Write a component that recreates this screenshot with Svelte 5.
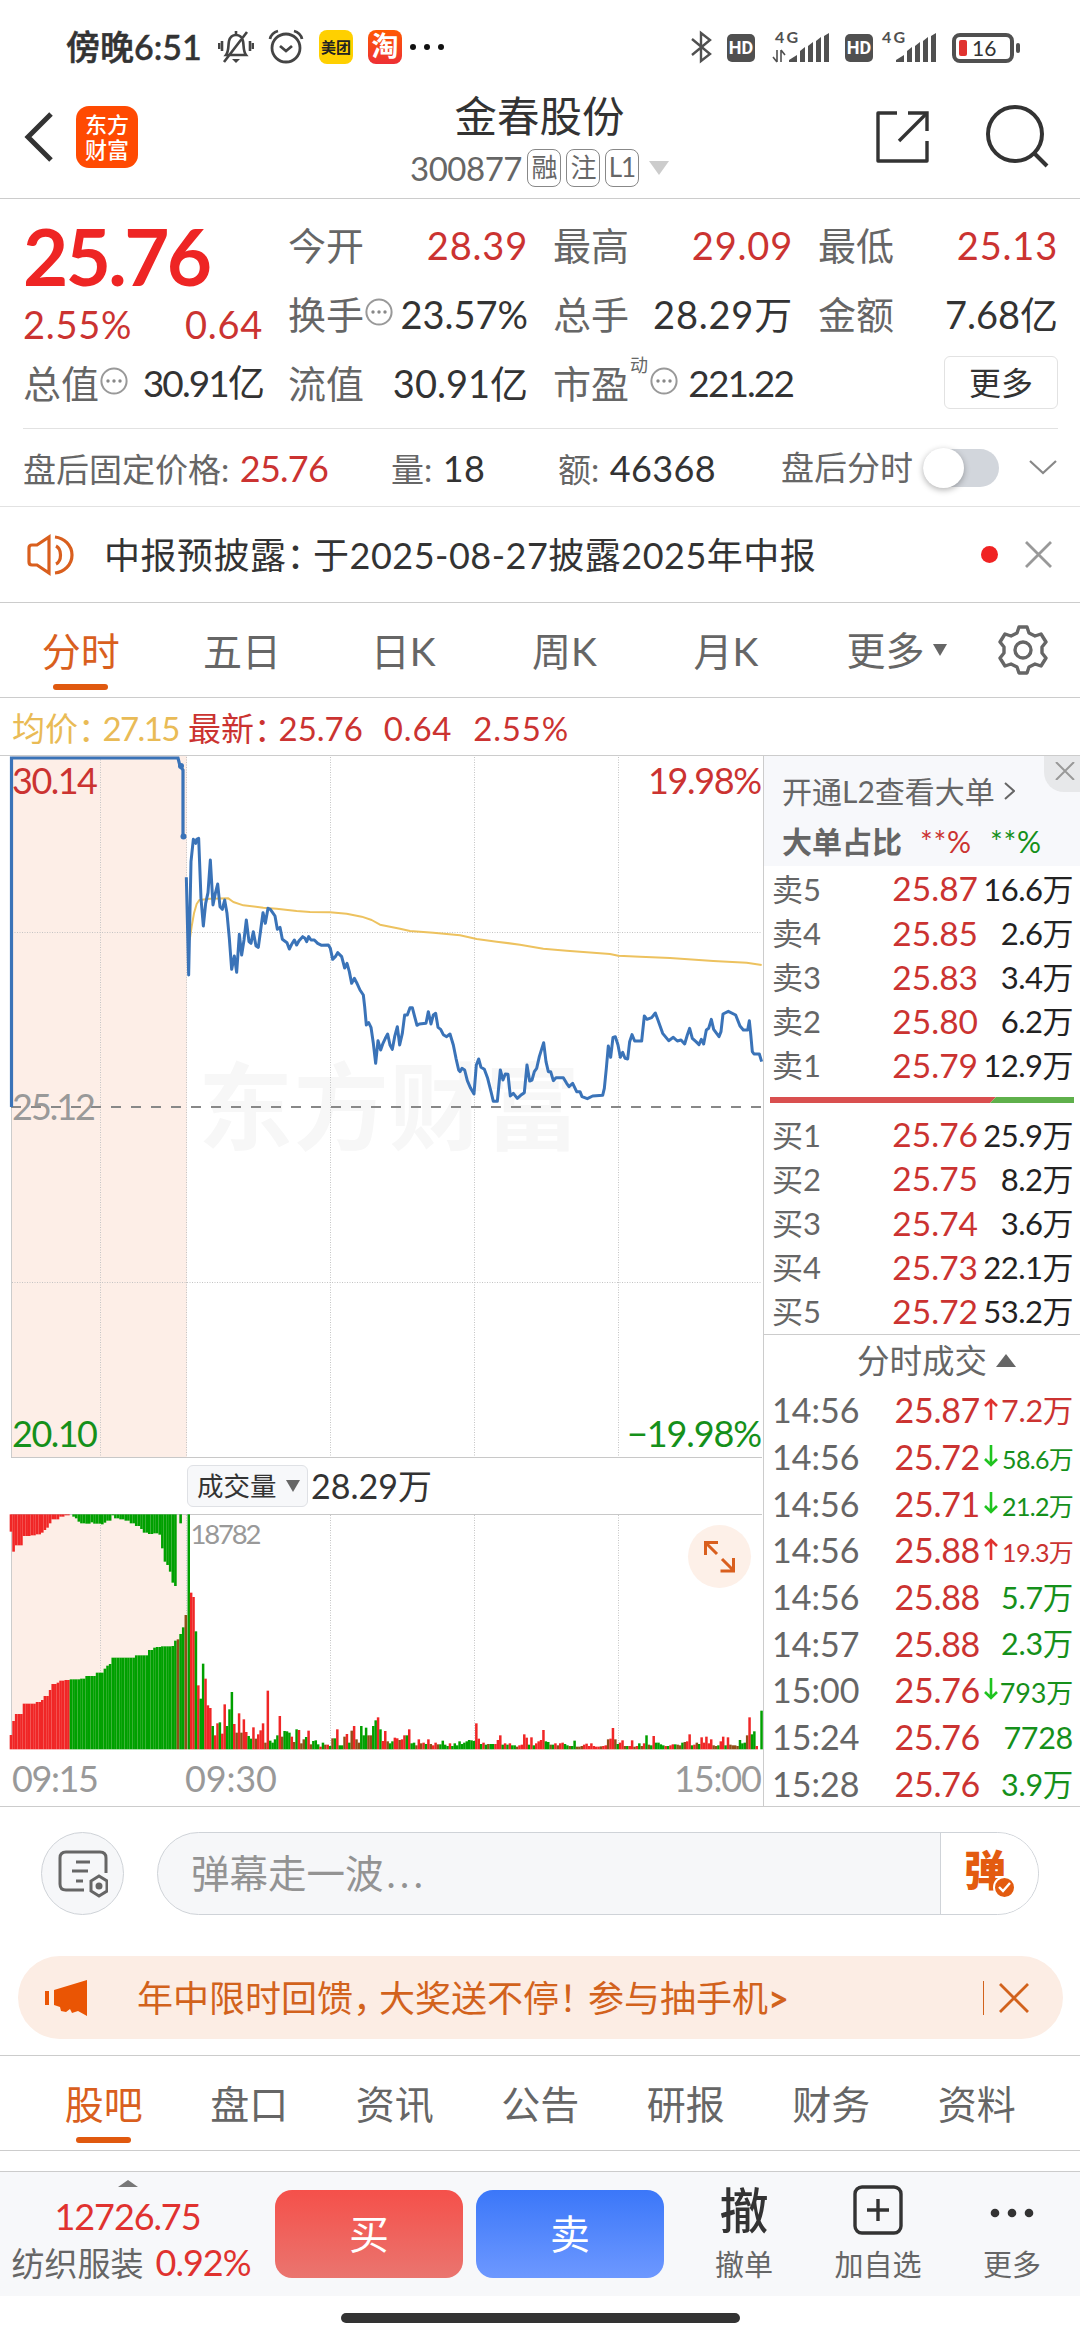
<script lang="ts">
  const periods = ["分时", "五日", "日K", "周K", "月K"];
  const sections = ["股吧", "盘口", "资讯", "公告", "研报", "财务", "资料"];

  const asks = [
    ["卖5", "25.87", "16.6万"],
    ["卖4", "25.85", "2.6万"],
    ["卖3", "25.83", "3.4万"],
    ["卖2", "25.80", "6.2万"],
    ["卖1", "25.79", "12.9万"],
  ];
  const bids = [
    ["买1", "25.76", "25.9万"],
    ["买2", "25.75", "8.2万"],
    ["买3", "25.74", "3.6万"],
    ["买4", "25.73", "22.1万"],
    ["买5", "25.72", "53.2万"],
  ];

  const trades = [
    { time: "14:56", price: "25.87", dir: "up", vol: "7.2万", tone: "red", size: "" },
    { time: "14:56", price: "25.72", dir: "down", vol: "58.6万", tone: "green", size: "small" },
    { time: "14:56", price: "25.71", dir: "down", vol: "21.2万", tone: "green", size: "small" },
    { time: "14:56", price: "25.88", dir: "up", vol: "19.3万", tone: "red", size: "small" },
    { time: "14:56", price: "25.88", dir: "", vol: "5.7万", tone: "green", size: "" },
    { time: "14:57", price: "25.88", dir: "", vol: "2.3万", tone: "green", size: "" },
    { time: "15:00", price: "25.76", dir: "down", vol: "793万", tone: "green", size: "mid" },
    { time: "15:24", price: "25.76", dir: "", vol: "7728", tone: "green", size: "" },
    { time: "15:28", price: "25.76", dir: "", vol: "3.9万", tone: "green", size: "" },
  ];

  // chart series are stored on a grid three times finer than the layout
  const pricePoints =
    "559,412 566,705 573,365 580,298 587,310 590,298 596,295 603,475 610,558 617,490 624,458 631,360 639,495 646,460 653,432 660,500 667,508 674,480 681,520 688,595 695,688 703,648 710,697 718,583 725,645 732,600 739,540 747,605 753,610 760,575 768,618 775,622 782,570 789,518 796,550 804,505 811,508 818,518 825,528 832,568 840,562 847,598 854,603 861,608 868,627 875,613 883,600 890,615 897,602 908,590 915,595 920,605 926,590 933,600 943,600 953,610 965,616 985,615 991,625 998,658 1006,650 1013,638 1025,650 1034,684 1041,670 1048,695 1055,730 1063,715 1070,728 1080,750 1090,765 1094,800 1099,855 1106,848 1113,862 1120,910 1127,970 1134,902 1142,930 1149,910 1156,895 1163,882 1170,915 1177,928 1184,890 1192,860 1199,915 1207,880 1214,825 1222,825 1230,803 1237,803 1244,830 1251,856 1258,852 1278,850 1285,815 1293,852 1300,825 1307,820 1314,862 1322,868 1330,884 1340,890 1350,882 1360,915 1368,955 1376,990 1380,995 1386,985 1394,990 1402,1022 1412,1045 1422,1062 1429,975 1436,957 1443,982 1453,988 1463,1015 1473,1055 1480,1084 1492,1084 1501,990 1509,1020 1516,1002 1524,1003 1531,1068 1540,1060 1552,1075 1562,1066 1573,1058 1581,975 1589,1023 1596,1020 1603,995 1610,985 1618,950 1631,908 1638,965 1645,995 1652,995 1660,1022 1668,1013 1690,1013 1700,1030 1707,1040 1718,1030 1730,1055 1740,1055 1746,1070 1762,1076 1778,1068 1808,1066 1813,1045 1819,985 1825,918 1832,952 1839,892 1846,890 1854,915 1861,952 1868,937 1875,955 1883,957 1889,905 1896,884 1904,903 1925,903 1933,828 1941,838 1955,833 1966,819 1973,838 1988,880 2006,902 2020,892 2032,903 2043,900 2054,912 2062,885 2069,865 2077,895 2088,905 2097,914 2104,898 2111,912 2119,870 2126,865 2134,838 2141,868 2157,890 2163,875 2169,822 2185,814 2207,825 2220,858 2230,870 2243,870 2248,842 2252,880 2257,935 2262,942 2278,942 2285,965";
  const avgPoints =
    "569,600 575,560 582,520 590,492 598,480 630,476 685,475 700,486 730,496 790,503 830,506 890,513 930,516 990,517 1040,521 1085,530 1115,540 1140,554 1200,566 1230,573 1300,578 1380,586 1430,597 1490,605 1560,614 1630,626 1700,632 1830,642 1855,647 1920,650 2010,654 2140,663 2240,668 2285,675";

  // one bar per minute: r = up, g = down, b = overlap
  const volumes =
    "g705 r470 r457 g354 r192 g152 g257 r212 r132 r124 g70 r42 r78 g81 r47 r135 g70 g120 g172 r76 b50 r108 b50 r90 r52 g40 g32 r66 b32 r45 r57 r78 b20 r176 g26 g20 g30 g42 r100 b38 g55 g54 g50 r38 b22 g60 r58 b18 b30 g37 r56 b15 g25 g27 g15 r8 g20 b14 r14 g10 b33 g33 r60 g12 g12 b38 r46 g20 b56 r70 b30 b20 g70 g42 g65 b42 b42 g70 g87 r96 g60 r25 r55 b24 g18 g24 r35 r33 b28 r30 r42 g42 r60 g18 g20 b12 r30 b18 r20 g16 r30 b16 r12 r20 b15 g15 g26 g14 g10 r18 g10 g18 g12 g24 g16 g20 g24 g28 g27 g25 r78 r32 g16 r20 g14 b16 g16 g16 r16 r28 r42 g14 r18 g14 r18 g12 g12 b8 r12 r14 r45 r35 g14 r36 g12 r18 r24 r28 r58 g24 g22 b14 g14 r18 b12 r18 r20 g16 g12 b10 g10 g26 b8 b8 b10 r14 r17 r10 r18 r10 r8 r8 b9 r10 r12 b30 r32 r64 b30 g16 r20 r27 b10 g10 r10 r27 b8 r10 g18 b10 r18 g42 b14 g12 r40 g20 g20 g15 g12 r10 g10 r12 r15 g15 b14 b12 g20 b22 r24 r45 g12 r14 b20 g16 r36 r20 r38 r18 r30 b12 b10 g12 r24 r38 g12 r36 b14 b12 b12 b10 g28 g18 g20 b42 r96 g45 g54 r10 g0 g116"
      .split(" ")
      .map((v, i) => ({ x: 562.5 + i * 7.19, tone: v[0], h: Number(v.slice(1)) }));

  type Step = [number, number];
  const matched: Step[] = [
    [29, 1005], [36, 963], [44, 942], [67, 911], [106, 906], [122, 900], [130, 888], [145, 870], [153, 852],
    [168, 848], [177, 842], [192, 840], [208, 838], [240, 836], [255, 828], [286, 818], [311, 806], [319, 797],
    [327, 792], [336, 773], [405, 766], [444, 750], [460, 743], [468, 741], [485, 739], [514, 738], [521, 722],
    [527, 718], [538, 702], [546, 682], [554, 645],
  ];
  const unmatched: Step[] = [
    [29, 395], [36, 455], [44, 436], [67, 408], [92, 406], [106, 403], [122, 398], [130, 390], [138, 383],
    [145, 370], [153, 358], [177, 350], [190, 346], [208, 343], [215, 350], [223, 355], [230, 365], [238, 370],
    [255, 371], [270, 367], [280, 371], [300, 373], [311, 368], [320, 362], [336, 346], [343, 355], [355, 358],
    [370, 362], [385, 370], [400, 378], [415, 387], [430, 398], [440, 402], [455, 400], [470, 404], [482, 445],
    [490, 485], [498, 495], [506, 515], [514, 548], [521, 558], [529, 343], [538, 370], [546, 343],
  ];

  function levelAt(steps: Step[], x: number) {
    let y = steps[0][1];
    for (const s of steps) if (s[0] <= x + 2) y = s[1];
    return y;
  }

  const auction = Array.from({ length: 68 }, (_, i) => {
    const x = 29 + i * 7.83;
    return {
      x,
      low: levelAt(matched, x),
      high: levelAt(unmatched, x),
      tone: x < 204 ? "r" : (x > 523 && x < 536) || x > 552 ? "b" : "g",
    };
  });
</script>

{#snippet more()}
  <svg class="hint" viewBox="0 0 28 28">
    <circle cx="14" cy="14" r="12.6" fill="none" stroke="#999" stroke-width="2" />
    <circle cx="8" cy="14" r="1.7" fill="#888" />
    <circle cx="14" cy="14" r="1.7" fill="#888" />
    <circle cx="20" cy="14" r="1.7" fill="#888" />
  </svg>
{/snippet}

<div class="screen">
  <div class="status">
    <span class="clock">傍晚6:51</span>
    <svg class="bell" width="36" height="36" viewBox="0 0 36 36" fill="none" stroke="#444" stroke-width="2.6">
      <path d="M8 26c3-4 2-9 3-14 1-4 4-6 7-6s6 2 7 6c1 5 0 10 3 14zM18 6V2M29 3L6 33M4 12v10M1 14v6M32 12v10M35 14v6" />
      <path d="M14 30h8l-4 4z" fill="#444" stroke="none" />
    </svg>
    <svg class="alarm" width="36" height="36" viewBox="0 0 36 36" fill="none" stroke="#444" stroke-width="2.8">
      <circle cx="18" cy="19" r="14" />
      <path d="M2 10c1-4 4-7 8-8M34 10c-1-4-4-7-8-8M12 17l6 5 6-5" />
    </svg>
    <span class="app meituan">美团</span>
    <span class="app taobao">淘</span>
    <svg class="dots" width="36" height="8" viewBox="0 0 36 8" fill="#111">
      <circle cx="4" cy="4" r="3" /><circle cx="18" cy="4" r="3" /><circle cx="32" cy="4" r="3" />
    </svg>
    <svg class="radio" width="332" height="52" viewBox="0 -8 332 52" fill="#505050">
      <path d="M2 10l18 15-9 7V4l9 7L2 26" fill="none" stroke="#505050" stroke-width="2.4" />
      <rect x="37" y="5" width="28" height="28" rx="5" />
      <text class="hd" x="51" y="25" text-anchor="middle">HD</text>
      <text class="gen" x="85" y="14" textLength="23">4G</text>
      <path d="M87 21v12M83 28l4 5M91 33V21M91 21l4 5" fill="none" stroke="#505050" stroke-width="1.6" />
      <path d="M99 33v-2l8-5v7zM110 33V22l5-4v15zM118 33V17l5-4v20zM126 33V12l5-4v25zM134 33V7l5-3v29z" />
      <rect x="155" y="5" width="28" height="28" rx="5" />
      <text class="hd" x="169" y="25" text-anchor="middle">HD</text>
      <text class="gen" x="192" y="14" textLength="23">4G</text>
      <path d="M206 33v-2l8-5v7zM217 33V22l5-4v15zM225 33V17l5-4v20zM233 33V12l5-4v25zM241 33V7l5-3v29z" />
      <rect x="264" y="6" width="58" height="26" rx="6" fill="none" stroke="#505050" stroke-width="4" />
      <rect x="269" y="11" width="8" height="16" rx="2" fill="#e0322f" />
      <text x="282" y="27" class="charge">16</text>
      <rect x="326" y="14" width="4" height="10" rx="2" />
    </svg>
  </div>

  <header>
    <svg class="back" width="30" height="50" viewBox="0 0 30 50" fill="none" stroke="#333" stroke-width="5">
      <path d="M27 2L4 25l23 23" />
    </svg>
    <span class="logo"><span>东方</span><span>财富</span></span>
    <div class="title">
      <h1>金春股份</h1>
      <div class="code">
        <span>300877</span><em>融</em><em>注</em><em>L1</em>
        <svg width="20" height="14" viewBox="0 0 20 14"><path d="M0 0h20L10 14z" fill="#ccc" /></svg>
      </div>
    </div>
    <svg class="share" width="54" height="54" viewBox="0 0 54 54" fill="none" stroke="#333" stroke-width="3.4" stroke-linejoin="round">
      <path d="M22 3H3v48h49V31" />
      <path d="M33 3h19v18" stroke-linejoin="miter" />
      <path d="M51 4L24 31" />
    </svg>
    <svg class="search" width="64" height="64" viewBox="0 0 64 64" fill="none" stroke="#333" stroke-width="4">
      <circle cx="29" cy="29" r="27" /><path d="M48 48l13 13" />
    </svg>
  </header>

  <section class="quote">
    <div class="now">
      <strong>25.76</strong>
      <div class="change"><span>2.55%</span><span>0.64</span></div>
      <div class="cell tight"><label>总值</label>{@render more()}<b>30.91亿</b></div>
    </div>
    <div class="cell"><label>今开</label><b class="red">28.39</b></div>
    <div class="cell"><label>最高</label><b class="red">29.09</b></div>
    <div class="cell"><label>最低</label><b class="red">25.13</b></div>
    <div class="cell"><label>换手</label>{@render more()}<b>23.57%</b></div>
    <div class="cell wide"><label>总手</label><b>28.29万</b></div>
    <div class="cell"><label>金额</label><b>7.68亿</b></div>
    <div class="cell"><label>流值</label><b>30.91亿</b></div>
    <div class="cell tight"><label>市盈</label><sup>动</sup>{@render more()}<b>221.22</b></div>
    <div class="cell"><button class="more">更多</button></div>
  </section>

  <section class="after">
    <span class="fixed">盘后固定价格: <b class="red">25.76</b></span>
    <span class="qty">量: <b>18</b></span>
    <span class="amt">额: <b>46368</b></span>
    <span class="sw">盘后分时</span>
    <i class="toggle"></i>
    <svg width="28" height="15" viewBox="0 0 28 15" fill="none" stroke="#888" stroke-width="2.2"><path d="M1 1l13 12L27 1" /></svg>
  </section>

  <section class="notice">
    <svg width="48" height="42" viewBox="0 0 48 42" fill="none" stroke="#d95f1e" stroke-width="3.2">
      <path d="M22 3v36L10 31H5c-2 0-3-1-3-3V14c0-2 1-3 3-3h5zM29 12c6 3 6 15 0 18M28 3c9 1 17 8 17 18s-8 17-17 18" />
    </svg>
    <p>中报预披露<span class="half">：</span>于2025-08-27披露2025年中报</p>
    <i class="dot"></i>
    <svg class="x" width="27" height="27" viewBox="0 0 27 27" stroke="#999" stroke-width="2.8"><path d="M1 1l25 25M26 1L1 26" /></svg>
  </section>

  <nav class="periods">
    {#each periods as period, i}
      <span class:active={i === 0}>{period}</span>
    {/each}
    <span class="drop">更多<svg width="14" height="12" viewBox="0 0 14 12"><path d="M0 0h14L7 12z" fill="#666" /></svg></span>
    <svg class="gear" width="50" height="50" viewBox="0 0 50 50" fill="none" stroke="#666" stroke-width="3.4" stroke-linejoin="round">
      <path d="M21 2h8l2 6 6 3 6-2 5 8-4 5v6l4 5-5 8-6-2-6 3-2 6h-8l-2-6-6-3-6 2-5-8 4-5v-6l-4-5 5-8 6 2 6-3z" />
      <circle cx="25" cy="25" r="8" />
    </svg>
  </nav>

  <p class="legend">
    <span class="avg">均价<span class="half">：</span><b>27.15</b></span><span>最新<span class="half">：</span>25.76</span><span class="delta">0.64</span><span class="delta">2.55%</span>
  </p>

  <div class="market">
    <div class="charts">
      <svg class="price" width="763" height="702" viewBox="0 756 763 702">
        <rect x="12" y="756" width="175" height="702" fill="#fdeee7" />
        <text class="mark" x="198" y="1143" textLength="382">东方财富</text>
        <g stroke="#c4c4c4" stroke-dasharray="1 1.5">
          <path d="M100.5 757v700M186.5 757v700M330.5 757v700M474.5 757v700M618.5 757v700M12 932.5h750M12 1282.5h750" />
        </g>
        <path d="M11.5 1107v350" stroke="#ccc" />
        <path d="M11 1107h751" stroke="#888" stroke-width="2" stroke-dasharray="10 10" />
        <path d="M11 1457.5h751" stroke="#c8c8c8" />
        <path d="M11.5 1107V758H178l2 8 3 4v65" fill="none" stroke="#3a73b8" stroke-width="3.2" />
        <circle cx="181" cy="766" r="3" fill="#3a73b8" />
        <circle cx="183.5" cy="836.5" r="3" fill="#3a73b8" />
        <g transform="translate(0 740) scale(.33333)" fill="none" stroke-linejoin="round">
          <polyline points={avgPoints} stroke="#edc25f" stroke-width="6" />
          <polyline points={pricePoints} stroke="#3a73b8" stroke-width="9" />
        </g>
        <g class="scale">
          <text x="12" y="794" fill="#cb3331" textLength="86">30.14</text>
          <text x="762" y="794" fill="#cb3331" text-anchor="end" textLength="114">19.98%</text>
          <text x="12" y="1120" fill="#999" textLength="84">25.12</text>
          <text x="12" y="1447" fill="#15901a" textLength="86">20.10</text>
          <text x="762" y="1447" fill="#15901a" text-anchor="end" textLength="135">−19.98%</text>
        </g>
      </svg>
      <div class="indicator">
        <span class="pick">成交量<svg width="14" height="12" viewBox="0 0 14 12"><path d="M0 0h14L7 12z" fill="#666" /></svg></span>
        <span>28.29万</span>
      </div>
      <svg class="volume" width="763" height="292" viewBox="0 1514 763 292">
        <rect x="12" y="1514" width="175" height="235" fill="#fdeee7" />
        <path d="M11 1514.5h751" stroke="#c8c8c8" />
        <path d="M11.5 1514v235" stroke="#ccc" />
        <path d="M100.5 1515v234M186.5 1515v234M330.5 1515v234M474.5 1515v234M618.5 1515v234" stroke="#c4c4c4" stroke-dasharray="1 1.5" />
        <g transform="translate(0 1400) scale(.33333)">
          {#each auction as bar}
            <rect class={bar.tone} x={bar.x} y={bar.low} width="7.83" height={1048 - bar.low} />
            <rect class={bar.tone} x={bar.x} y="343" width="7.83" height={bar.high - 343} />
          {/each}
          {#each volumes as bar}
            <rect class={bar.tone} x={bar.x} y={1048 - bar.h} width="7.5" height={bar.h} />
          {/each}
        </g>
        <text class="peak" x="190.5" y="1544" textLength="71">18782</text>
        <circle cx="719.5" cy="1556.5" r="31.5" fill="#fdf0e8" />
        <path d="M705.5 1555v-12.5H718M706 1543l11 11M733.5 1558v13h-13M733 1570l-11-11" fill="none" stroke="#d95f1e" stroke-width="3" />
        <g class="scale" fill="#999">
          <text x="12" y="1792" textLength="87">09:15</text>
          <text x="185" y="1792" textLength="92">09:30</text>
          <text x="762" y="1792" text-anchor="end" textLength="88">15:00</text>
        </g>
      </svg>
    </div>

    <aside>
      <div class="level2">
        <span class="open">开通L2查看大单<svg width="11" height="18" viewBox="0 0 11 18" fill="none" stroke="#666" stroke-width="2"><path d="M1 1l9 8-9 8" /></svg></span>
        <span class="ratio">大单占比<i class="red">**%</i><i class="green">**%</i></span>
        <span class="shut"><svg width="20" height="18" viewBox="0 0 20 18" stroke="#999" stroke-width="2"><path d="M1 0l18 18M19 0L1 18" /></svg></span>
      </div>
      <div class="book">
        {#each asks as [name, price, size]}
          <div class="order"><span>{name}</span><b>{price}</b><em>{size}</em></div>
        {/each}
      </div>
      <svg class="balance" width="304" height="6" viewBox="0 0 304 6">
        <path d="M0 0h226l-6 6H0z" fill="#d94f4f" /><path d="M226 0h78v6h-84z" fill="#5fb04b" />
      </svg>
      <div class="book bids">
        {#each bids as [name, price, size]}
          <div class="order"><span>{name}</span><b>{price}</b><em>{size}</em></div>
        {/each}
      </div>
      <div class="ticks-head">分时成交<svg width="20" height="13" viewBox="0 0 20 13"><path d="M0 13h20L10 0z" fill="#666" /></svg></div>
      {#each trades as t}
        <div class="tick">
          <span>{t.time}</span><b>{t.price}</b>
          <svg class="dir" width="14" height="22" viewBox="0 0 14 22" fill="none" stroke-width="2.6">
            {#if t.dir === "up"}
              <path d="M7 22V2M1 8l6-6 6 6" stroke="#e0322f" />
            {:else if t.dir === "down"}
              <path d="M7 0v20M1 14l6 6 6-6" stroke="#1fc41f" />
            {/if}
          </svg>
          <em class="{t.tone} {t.size}">{t.vol}</em>
        </div>
      {/each}
    </aside>
  </div>

  <section class="danmaku">
    <span class="round">
      <svg width="50" height="50" viewBox="0 0 50 50" fill="none" stroke="#666" stroke-width="3">
        <path d="M26 41H8c-4 0-6-2-6-6V9c0-4 2-6 6-6h34c4 0 6 2 6 6v15M18 13h14M14 22h16M18 32h7" />
        <path d="M41 27l8 5v10l-8 5-8-5V32z" /><circle cx="41" cy="37" r="2" fill="#666" />
      </svg>
    </span>
    <div class="field">
      <span>弹幕走一波<i>...</i></span>
      <div class="send">
        弹<svg width="23" height="23" viewBox="0 0 23 23"><circle cx="11.5" cy="11.5" r="10.5" fill="#e35b10" stroke="#fff" stroke-width="2" /><path d="M6 11l4 4 7-8" fill="none" stroke="#fff" stroke-width="2.4" /></svg>
      </div>
    </div>
  </section>

  <section class="promo">
    <svg width="42" height="36" viewBox="0 0 42 36" fill="#ea5504"><path d="M0 11h4v14H0zM9 10L42 0v36l-9-5-6 2-2-4-4 3-5-1-1-4-6-2z" /></svg>
    <p>年中限时回馈<span class="half">，</span>大奖送不停<span class="half bang">！</span>参与抽手机<b>&gt;</b></p>
    <i></i>
    <svg class="x" width="30" height="30" viewBox="0 0 30 30" stroke="#d2621c" stroke-width="2.8"><path d="M1 1l28 28M29 1L1 29" /></svg>
  </section>

  <nav class="sections">
    {#each sections as name, i}
      <span class:active={i === 0}>{name}</span>
    {/each}
  </nav>

  <footer>
    <div class="index">
      <svg width="20" height="7" viewBox="0 0 20 7"><path d="M0 7L10 0l10 7z" fill="#777" /></svg>
      <b>12726.75</b>
      <span>纺织服装<em>0.92%</em></span>
    </div>
    <button class="buy">买</button>
    <button class="sell">卖</button>
    <div class="act"><strong>撤</strong><span>撤单</span></div>
    <div class="act">
      <svg width="50" height="50" viewBox="0 0 50 50" fill="none" stroke="#333" stroke-width="3.4"><rect x="2" y="2" width="46" height="46" rx="7" /><path d="M25 14v22M14 25h22" /></svg>
      <span>加自选</span>
    </div>
    <div class="act">
      <svg width="50" height="50" viewBox="0 0 50 50" fill="#333"><circle cx="8" cy="28" r="4.3" /><circle cx="25" cy="28" r="4.3" /><circle cx="42" cy="28" r="4.3" /></svg>
      <span>更多</span>
    </div>
  </footer>
  <div class="home"><i></i></div>
</div>

<style>
  :global(body) {
    background: #fff;
  }

  .screen {
    display: flex;
    flex-direction: column;
    width: 1080px;
    height: 2340px;
    overflow: hidden;
    box-sizing: border-box;
    background: #fff;
    color: #333;
    font-family: Lato, "Noto Sans CJK SC", sans-serif;
    line-height: 1;
    white-space: nowrap;
  }

  .screen :global(*) {
    box-sizing: border-box;
    flex-shrink: 0;
  }

  svg {
    display: block;
  }

  b,
  em,
  i,
  h1 {
    margin: 0;
    font-weight: 400;
    font-style: normal;
  }

  p {
    margin: 0;
  }

  button {
    padding: 0;
    font-family: inherit;
  }

  .red {
    color: #cb3331;
  }

  .green {
    color: #15901a;
  }

  /* half-width form of the CJK punctuation */
  .half {
    margin-right: 8px;
    font-feature-settings: "halt";
  }

  .status {
    display: flex;
    align-items: center;
    height: 94px;
    padding: 0 58px 0 66px;
  }

  .clock {
    width: 152px;
    font-size: 34px;
    font-weight: 500;
    -webkit-text-stroke: 0.5px #333;
  }

  .alarm {
    margin-left: 14px;
  }

  .app {
    width: 34px;
    height: 34px;
    margin-left: 15px;
    border-radius: 8px;
    text-align: center;
    font-weight: 700;
  }

  .meituan {
    background: #ffd000;
    color: #222;
    font-size: 15px;
    line-height: 34px;
  }

  .taobao {
    background: linear-gradient(#ff5a00, #ee2f35);
    color: #fff;
    font-size: 27px;
    line-height: 32px;
  }

  .dots {
    margin-left: 7px;
  }

  .radio {
    margin-left: auto;
  }

  .hd {
    fill: #fff;
    font: 700 18px Roboto, sans-serif;
  }

  .gen {
    font: 700 16px Lato, sans-serif;
  }

  .charge {
    fill: #333;
    font-size: 21px;
  }

  header {
    display: flex;
    align-items: center;
    height: 105px;
    padding: 0 30px 18px 24px;
    border-bottom: 1px solid #ccc;
  }

  .logo {
    display: flex;
    flex-direction: column;
    justify-content: center;
    align-items: center;
    width: 62px;
    height: 62px;
    margin-left: 22px;
    border-radius: 13px;
    background: #ff4a02;
    color: #fff;
    font-size: 22px;
    font-weight: 500;
    line-height: 25px;
  }

  .title {
    flex: 1;
    padding: 8px 0 0 66px;
    text-align: center;
  }

  h1 {
    font-size: 42.5px;
    line-height: 50px;
  }

  .code {
    display: flex;
    align-items: center;
    justify-content: center;
    height: 46px;
    margin-top: 4px;
    color: #666;
    font-size: 33px;
    letter-spacing: -0.5px;
  }

  .code em {
    width: 34px;
    height: 38px;
    margin-left: 5px;
    border: 1.5px solid #888;
    border-radius: 8px;
    font-size: 26px;
    line-height: 35px;
    letter-spacing: -1px;
  }

  .code svg {
    margin-left: 10px;
  }

  .search {
    margin-left: 57px;
  }

  .quote {
    display: grid;
    grid-template-columns: repeat(4, 240px);
    grid-template-rows: repeat(3, 69px);
    column-gap: 25px;
    height: 230px;
    margin: 0 22px 0 23px;
    padding-top: 11px;
    border-bottom: 1px solid #e2e2e2;
  }

  .now {
    grid-row: span 3;
    display: flex;
    flex-direction: column;
  }

  .now strong {
    height: 89px;
    color: #ee2524;
    font-size: 78px;
    font-weight: 700;
    line-height: 92px;
    letter-spacing: -2.6px;
  }

  .change {
    display: flex;
    justify-content: space-between;
    height: 49px;
    color: #cb3331;
    font-size: 38px;
    line-height: 51px;
    letter-spacing: 0.7px;
  }

  .cell {
    display: flex;
    align-items: center;
    height: 69px;
    color: #333;
    font-size: 38px;
  }

  .cell label {
    color: #666;
  }

  .cell b {
    margin-left: auto;
  }

  .cell .red,
  .wide b {
    letter-spacing: 0.8px;
  }

  .tight b {
    font-size: 37px;
    letter-spacing: -1.9px;
  }

  .cell sup {
    align-self: flex-start;
    margin: 7px 1px 0 1px;
    color: #666;
    font-size: 18px;
    line-height: 20px;
  }

  .hint {
    width: 28px;
    height: 28px;
    margin: 0 0 4px 1px;
  }

  .more {
    width: 114px;
    height: 53px;
    margin: 0 0 0 auto;
    border: 1.5px solid #e2e2e2;
    border-radius: 6px;
    background: #fff;
    color: #333;
    font-size: 32px;
    line-height: 48px;
  }

  .after {
    display: flex;
    align-items: center;
    height: 78px;
    padding: 0 26px 0 23px;
    border-bottom: 1px solid #e2e2e2;
    color: #666;
    font-size: 33px;
  }

  .after b {
    margin-left: 2px;
    font-size: 36px;
  }

  .after .red {
    letter-spacing: -0.7px;
  }

  .after b:not(.red) {
    color: #333;
    letter-spacing: 0.4px;
  }

  .fixed {
    width: 368px;
  }

  .qty {
    width: 167px;
  }

  .amt {
    width: 223px;
  }

  .toggle {
    width: 76px;
    height: 38px;
    margin: 0 30px 0 10px;
    border-radius: 19px;
    background: #d2d6dc;
  }

  .toggle::before {
    content: "";
    display: block;
    width: 41px;
    height: 40px;
    margin-top: -1px;
    border-radius: 50%;
    background: #fff;
    box-shadow: 0 2px 6px rgba(0, 0, 0, 0.3);
  }

  .notice {
    display: flex;
    align-items: center;
    height: 96px;
    padding: 0 28px 0 27px;
    border-bottom: 1px solid #ccc;
  }

  .notice p {
    margin-left: 29px;
    font-size: 36px;
    letter-spacing: 0.5px;
  }

  .notice .dot {
    width: 17px;
    height: 17px;
    margin: 0 27px 0 auto;
    border-radius: 50%;
    background: #f02323;
  }

  .periods {
    display: flex;
    align-items: center;
    height: 95px;
    border-bottom: 1px solid #ccc;
    color: #666;
    font-size: 39px;
  }

  .periods > span {
    width: 161.3px;
    height: 94px;
    line-height: 97px;
    text-align: center;
  }

  .periods .drop {
    display: flex;
    align-items: center;
    justify-content: center;
    gap: 9px;
    width: 181px;
  }

  .gear {
    margin-left: 11px;
  }

  .active {
    display: flex;
    flex-direction: column;
    align-items: center;
    color: #d95f1e;
  }

  .active::after {
    content: "";
    width: 55px;
    height: 6px;
    margin-top: -16px;
    border-radius: 3px;
    background: #e0590f;
  }

  .legend {
    display: flex;
    align-items: center;
    height: 58px;
    padding: 3px 0 0 12px;
    border-bottom: 1px solid #ccc;
    color: #cb3331;
    font-size: 33px;
  }

  .avg {
    width: 176px;
    color: #e9bb56;
  }

  .avg b {
    letter-spacing: -1.6px;
  }

  .delta {
    margin-left: 21px;
    letter-spacing: 0.8px;
  }

  .market {
    display: flex;
    height: 1051px;
    border-bottom: 1px solid #ccc;
  }

  .charts {
    width: 764px;
    border-right: 1px solid #ccc;
  }

  .scale {
    font-size: 36px;
  }

  .mark {
    fill: #f7f7f7;
    font-size: 95px;
    font-weight: 700;
  }

  .indicator {
    display: flex;
    align-items: center;
    gap: 3px;
    height: 56px;
    padding-left: 187px;
    font-size: 34px;
  }

  .pick {
    display: flex;
    align-items: center;
    gap: 9px;
    width: 121px;
    height: 42px;
    padding-left: 9px;
    border: 1px solid #dfe1e5;
    border-radius: 6px;
    background: #f7f8fa;
    font-size: 26.5px;
  }

  .r {
    fill: #f02626;
  }

  .g {
    fill: #00a000;
  }

  .b {
    fill: #8f4f18;
  }

  .peak {
    fill: #999;
    font-size: 27.5px;
  }

  aside {
    width: 316px;
  }

  .level2 {
    position: relative;
    height: 110px;
    padding: 10px 0 0 18px;
    background: #f7f8fb;
    color: #666;
    font-size: 30px;
  }

  .open {
    display: flex;
    align-items: center;
    gap: 9px;
    height: 50px;
  }

  .ratio {
    display: flex;
    align-items: center;
    height: 50px;
    font-weight: 700;
  }

  .ratio i {
    width: 70px;
    padding-left: 18px;
    letter-spacing: 0.7px;
  }

  .shut {
    position: absolute;
    top: 0;
    right: 0;
    width: 36px;
    height: 36px;
    padding: 6px 0 0 11px;
    border-radius: 0 0 0 20px;
    background: #e7e8ea;
  }

  .book {
    padding-top: 1px;
  }

  .order {
    display: flex;
    align-items: center;
    height: 44.2px;
    padding: 0 7px 0 8px;
    font-size: 31px;
  }

  .order span {
    width: 60px;
    color: #666;
  }

  .order b {
    flex: 1;
    color: #cb3331;
    font-size: 33.5px;
    text-align: right;
  }

  .order em {
    width: 95px;
    color: #222;
    text-align: right;
    letter-spacing: -0.5px;
  }

  .balance {
    margin: 9px 0 9px 6px;
  }

  .bids {
    height: 223px;
    border-bottom: 1px solid #ccc;
  }

  .ticks-head {
    display: flex;
    align-items: center;
    justify-content: center;
    gap: 9px;
    height: 52px;
    padding-left: 29px;
    color: #666;
    font-size: 32.5px;
  }

  .tick {
    display: flex;
    align-items: center;
    height: 46.7px;
    padding: 0 7px 0 8px;
    font-size: 34px;
  }

  .tick span {
    color: #666;
  }

  .tick b {
    flex: 1;
    color: #cb3331;
    text-align: right;
    letter-spacing: -0.3px;
  }

  .dir {
    margin: 0 0 2px 4px;
  }

  .tick em {
    width: 75px;
    font-size: 30.5px;
    text-align: right;
    letter-spacing: -0.3px;
  }

  .tick em.small {
    padding-top: 5px;
    font-size: 25px;
    letter-spacing: -0.7px;
  }

  .tick em.mid {
    padding-top: 4px;
    font-size: 27px;
    letter-spacing: -0.2px;
  }

  .danmaku {
    display: flex;
    align-items: center;
    height: 133px;
    padding: 0 41px;
  }

  .round {
    display: flex;
    align-items: center;
    justify-content: center;
    width: 83px;
    height: 83px;
    border: 1px solid #cfd3d8;
    border-radius: 50%;
    background: #f6f7f9;
  }

  .field {
    display: flex;
    align-items: center;
    width: 882px;
    height: 83px;
    margin-left: 33px;
    padding-left: 33px;
    border: 1px solid #cfd3d8;
    border-radius: 42px;
    background: #f6f7f9;
    color: #939393;
    font-size: 38.5px;
    overflow: hidden;
  }

  .field i {
    margin-left: 3px;
    letter-spacing: 4.5px;
  }

  .send {
    position: relative;
    width: 98px;
    height: 83px;
    margin-left: auto;
    padding-left: 23px;
    border-left: 1px solid #cfd3d8;
    background: #fff;
    color: #e35b10;
    font-size: 42px;
    font-weight: 900;
    line-height: 76px;
  }

  .send svg {
    position: absolute;
    left: 52px;
    top: 44px;
  }

  .promo {
    display: flex;
    align-items: center;
    width: 1045px;
    height: 83px;
    margin: 16px 0 16px 18px;
    padding: 0 34px 0 27px;
    border-radius: 42px;
    background: #fcede4;
    color: #d2621c;
  }

  .promo p {
    margin-left: 50px;
    font-size: 36px;
  }

  .promo b {
    font-weight: 700;
  }

  .bang {
    margin-right: 11px;
  }

  .promo i {
    width: 1.5px;
    height: 34px;
    margin: 0 15px 0 auto;
    background: #d2621c;
  }

  .sections {
    display: flex;
    height: 96px;
    padding-left: 31px;
    border-top: 1px solid #ccc;
    border-bottom: 1px solid #ccc;
    color: #666;
    font-size: 39px;
  }

  .sections span {
    width: 145.5px;
    line-height: 97px;
    text-align: center;
  }

  footer {
    display: flex;
    align-items: flex-start;
    height: 125px;
    margin-top: 20px;
    border-top: 1px solid #ccc;
    background: #f7f8fa;
  }

  .index {
    display: flex;
    flex-direction: column;
    align-items: center;
    width: 263px;
    margin-right: 12px;
    padding: 8px 1px 0 0;
    color: #e0322f;
    font-size: 36px;
  }

  .index svg {
    margin-right: 7px;
  }

  .index b {
    margin-right: 7px;
    line-height: 58px;
    letter-spacing: -1.1px;
  }

  .index span {
    color: #666;
    font-size: 33px;
    line-height: 34px;
  }

  .index em {
    margin-left: 12px;
    color: #e0322f;
    font-size: 36px;
    letter-spacing: -1px;
  }

  footer button {
    width: 188px;
    height: 88px;
    margin: 18px 13px 0 0;
    border: 0;
    border-radius: 17px;
    color: #fff;
    font-size: 40px;
    line-height: 84px;
  }

  .buy {
    background: linear-gradient(#f5504a, #ea756f);
  }

  .sell {
    background: linear-gradient(#3b77f9, #6d98ff);
  }

  .act {
    display: flex;
    flex-direction: column;
    align-items: center;
    width: 134px;
    padding-top: 13px;
    color: #666;
    font-size: 29px;
  }

  .act strong {
    color: #333;
    font-size: 49px;
    font-weight: 500;
    line-height: 50px;
  }

  .act span {
    line-height: 60px;
  }

  .home {
    display: flex;
    justify-content: center;
    padding-top: 17px;
  }

  .home i {
    width: 399px;
    height: 10px;
    border-radius: 5px;
    background: #333;
  }
</style>
